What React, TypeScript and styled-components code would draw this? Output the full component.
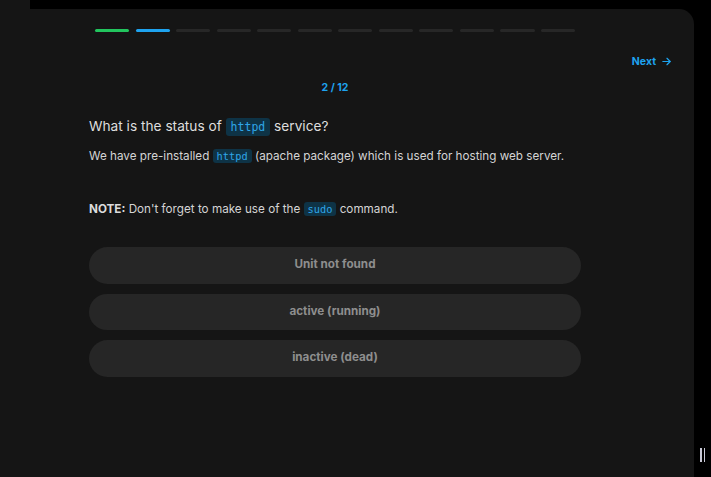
import styled, { createGlobalStyle } from "styled-components";

const GlobalStyle = createGlobalStyle`
    html, body {
        margin: 0;
        padding: 0;
        background: #000;
    }
    body {
        font-family: Inter, "Noto Sans", "Liberation Sans", sans-serif;
    }
`

const STEPS = 12;
const CURRENT = 2;
const answers = ["Unit not found", "active (running)", "inactive (dead)"];

export default function App(){
    return <>
        <GlobalStyle/>
        <Page>
            <Main>
                <TopStrip/>
                <Panel>
                    <Progress>
                        {Array.from({length: STEPS}).map((_, i) =>
                            <Step key={i} state={i < CURRENT - 1 ? "done" : i === CURRENT - 1 ? "current" : "todo"}/>
                        )}
                    </Progress>
                    <NextRow>
                        <NextButton>
                            Next
                            <svg width="11" height="11" viewBox="0 0 24 24" fill="none" stroke="currentColor" strokeWidth="2.6" strokeLinecap="round" strokeLinejoin="round">
                                <path d="M4 12h16"/>
                                <path d="M13 5l7 7-7 7"/>
                            </svg>
                        </NextButton>
                    </NextRow>
                    <Content>
                        <Counter>{`${CURRENT} / ${STEPS}`}</Counter>
                        <Question>What is the status of <Code big>httpd</Code> service?</Question>
                        <Text>We have pre-installed <Code>httpd</Code> (apache package) which is used for hosting web server.</Text>
                        <Note><b>NOTE:</b> Don't forget to make use of the <Code>sudo</Code> command.</Note>
                        <Answers>
                            {answers.map(a => <Answer key={a}>{a}</Answer>)}
                        </Answers>
                    </Content>
                </Panel>
            </Main>
            <Rail>
                <Handle>
                    <Bar/>
                    <Bar/>
                </Handle>
            </Rail>
        </Page>
    </>
}

const Page = styled.div`
    display: flex;
    width: 711px;
    height: 477px;
    overflow: hidden;
`
const Main = styled.div`
    width: 694px;
    display: flex;
    flex-direction: column;
`
const TopStrip = styled.div`
    width: 30px;
    height: 9px;
    background: #151515;
`
const Panel = styled.div`
    flex: 1;
    background: #151515;
    border-top-right-radius: 15px;
    display: flex;
    flex-direction: column;
`
const Progress = styled.div`
    display: flex;
    gap: 6.5px;
    width: 480px;
    margin: 20px 0 0 95px;
`
const Step = styled.div<{state: "done" | "current" | "todo"}>`
    flex: 1;
    height: 3px;
    border-radius: 2px;
    background: ${p => p.state === "done" ? "#22c55e" : p.state === "current" ? "#1ea3ef" : "#272727"};
`
const NextRow = styled.div`
    display: flex;
    justify-content: flex-end;
    padding-right: 22px;
    margin-top: 21px;
`
const NextButton = styled.div`
    display: flex;
    align-items: center;
    gap: 5px;
    height: 16px;
    color: #1ea3ef;
    font-size: 10.5px;
    font-weight: 700;
`
const Content = styled.div`
    width: 492px;
    margin-left: 89px;
    display: flex;
    flex-direction: column;
`
const Counter = styled.div`
    margin-top: 11px;
    text-align: center;
    color: #1ea3ef;
    font-size: 10.5px;
    font-weight: 700;
    line-height: 16px;
`
const Question = styled.div`
    margin-top: 20px;
    color: #dedede;
    font-size: 13.7px;
    line-height: 20px;
`
const Text = styled.div`
    margin-top: 10px;
    color: #d4d4d4;
    font-size: 11.7px;
    line-height: 18px;
    white-space: nowrap;
`
const Note = styled(Text)`
    margin-top: 35px;
    b {
        font-weight: 700;
        color: #dcdcdc;
    }
`
const Code = styled.code<{big?: boolean}>`
    font-family: "DejaVu Sans Mono", "Liberation Mono", monospace;
    font-size: ${p => p.big ? "11.5px" : "10.3px"};
    color: #2fa6e8;
    background: #0e3346;
    border-radius: 3px;
    padding: ${p => p.big ? "2px 5px" : "1px 4px"};
`
const Answers = styled.div`
    margin-top: 29px;
    display: flex;
    flex-direction: column;
    gap: 10px;
`
const Answer = styled.div`
    height: 36.5px;
    border-radius: 19px;
    background: #262626;
    color: #8e8e8e;
    font-size: 11.7px;
    font-weight: 700;
    display: flex;
    align-items: center;
    justify-content: center;
    padding-bottom: 2px;
    box-sizing: border-box;
`
const Rail = styled.div`
    flex: 1;
    display: flex;
    align-items: flex-end;
    justify-content: center;
    padding-bottom: 15px;
`
const Handle = styled.div`
    display: flex;
    gap: 2px;
`
const Bar = styled.div`
    width: 1.5px;
    height: 14px;
    background: #c9c9d6;
`
